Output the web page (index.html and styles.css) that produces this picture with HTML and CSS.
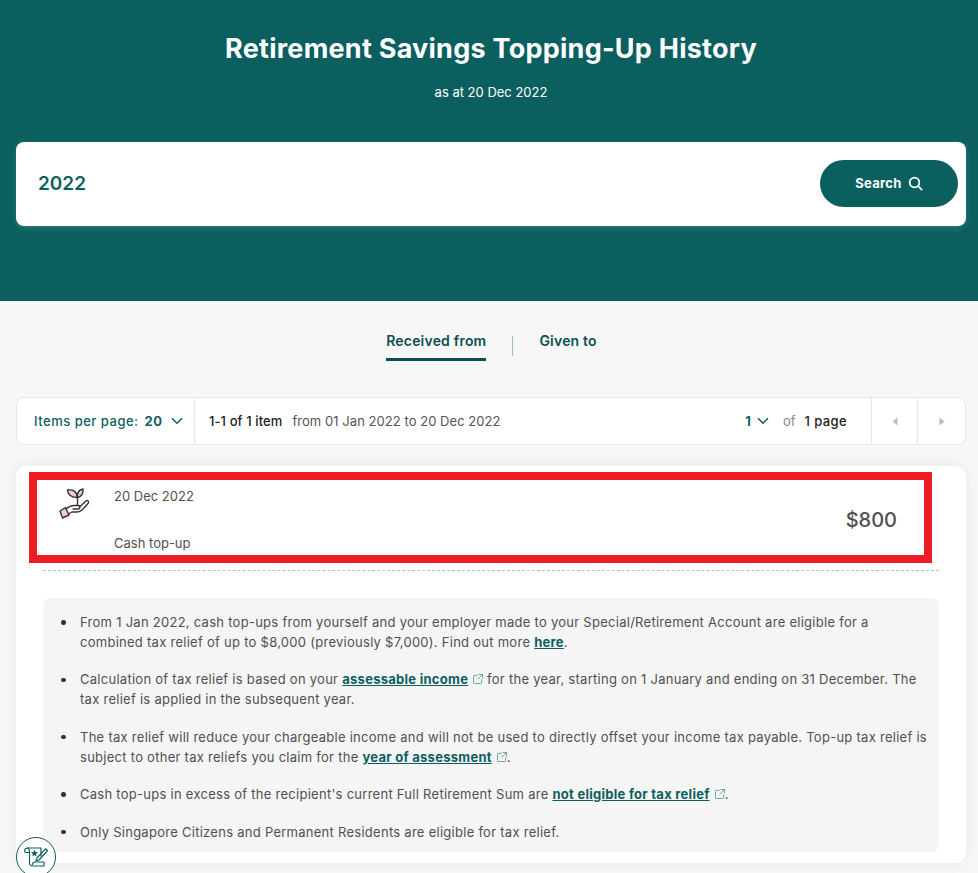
FILE: index.html
```html
<!DOCTYPE html>
<html>
<head>
  <title>Retirement Savings Topping-Up History</title>
  <link rel="stylesheet" href="styles.css">
</head>
<body>
  <div id="hero">
    <h1>Retirement Savings Topping-Up History</h1>
    <p class="as-at">as at 20 Dec 2022</p>
    <form id="searchForm">
      <div class="search-value">2022</div>
      <button type="button" class="search-btn">Search
        <svg width="15" height="15" viewBox="0 0 15 15" fill="none" stroke="#fff" stroke-width="1.8" stroke-linecap="round"><circle cx="6.5" cy="6.5" r="4.8"/><path d="M10.2 10.2 13.6 13.6"/></svg>
      </button>
    </form>
  </div>

  <div id="tabs">
    <div class="tab active">Received from</div>
    <div class="tab-sep"></div>
    <div class="tab">Given to</div>
  </div>

  <div id="toolbar">
    <div class="per-page">
      <span>Items per page:</span>
      <b>20</b>
      <svg class="chev" width="12" height="8" viewBox="0 0 12 8" fill="none" stroke="#0b5f5f" stroke-width="1.5"><path d="M1 1.2 6 6.2 11 1.2"/></svg>
    </div>
    <div class="range">
      <span class="range-count">1-1 of 1 item</span>
      <span class="range-dates">from 01 Jan 2022 to 20 Dec 2022</span>
    </div>
    <div class="pager">
      <b class="page-num">1</b>
      <svg class="chev" width="12" height="8" viewBox="0 0 12 8" fill="none" stroke="#0b5f5f" stroke-width="1.5"><path d="M1 1.2 6 6.2 11 1.2"/></svg>
      <span class="of">of</span>
      <span class="page-total">1 page</span>
    </div>
    <div class="arrow"><svg width="6" height="9" viewBox="0 0 6 9"><path d="M5.5 0.5V8.500L0.500 4.500Z" fill="#bdbdbd"/></svg></div>
    <div class="arrow"><svg width="6" height="9" viewBox="0 0 6 9"><path d="M0.500 0.500V8.500L5.500 4.500Z" fill="#bdbdbd"/></svg></div>
  </div>

  <div id="card">
    <div class="entry">
      <svg class="entry-icon" width="32" height="32" viewBox="0 0 32 32" fill="none" stroke="#3b3136" stroke-width="1.400" stroke-linejoin="round" stroke-linecap="round">
        <path d="M1 23 6.500 19.500 10 27 3.500 30Z" fill="#f3c9e0"/>
        <path d="M7 21C10 18.500 12 17.500 15 17.500H19C21.500 17.500 21.500 21 19 21H14"/>
        <path d="M20.500 19 27 13C28.500 11.500 30.500 13.500 29 15.500L23.500 21.500C22 23 20 24 18 24H13L9.500 26"/>
        <path d="M18.500 9.500V17"/>
        <path d="M18.500 9.500C13 9.500 9 7.500 8.500 2 13.500 1.200 18 3.500 18.500 9.500Z" fill="#f3c9e0"/>
        <path d="M18.500 9.500C18 5 20 1.800 24 1 24.500 5.500 22.500 8.500 18.500 9.500Z" fill="#f3c9e0"/>
      </svg>
      <div class="entry-text">
        <div>20 Dec 2022</div>
        <div>Cash top-up</div>
      </div>
      <div class="entry-amount">$800</div>
    </div>
    <div class="dots"></div>
    <ul class="notes">
      <li>From 1 Jan 2022, cash top-ups from yourself and your employer made to your Special/Retirement Account are eligible for a combined tax relief of up to $8,000 (previously $7,000). Find out more <a href="#">here</a>.</li>
      <li>Calculation of tax relief is based on your <a href="#">assessable income</a><svg class="ext" width="10" height="10" viewBox="0 0 11 11" fill="none" stroke="#5f9c9c" stroke-width="1"><path d="M5 1.500H1.500A1 1 0 0 0 .5 2.500V9.500A1 1 0 0 0 1.500 10.500H8.500A1 1 0 0 0 9.500 9.500V6M6 .5H10.500V5M10.500 .5 5 6"/></svg> for the year, starting on 1 January and ending on 31 December. The tax relief is applied in the subsequent year.</li>
      <li>The tax relief will reduce your chargeable income and will not be used to directly offset your income tax payable. Top-up tax relief is subject to other tax reliefs you claim for the <a href="#">year of assessment</a><svg class="ext" width="10" height="10" viewBox="0 0 11 11" fill="none" stroke="#5f9c9c" stroke-width="1"><path d="M5 1.500H1.500A1 1 0 0 0 .5 2.500V9.500A1 1 0 0 0 1.500 10.500H8.500A1 1 0 0 0 9.500 9.500V6M6 .5H10.500V5M10.500 .5 5 6"/></svg>.</li>
      <li>Cash top-ups in excess of the recipient's current Full Retirement Sum are <a href="#">not eligible for tax relief</a><svg class="ext" width="10" height="10" viewBox="0 0 11 11" fill="none" stroke="#5f9c9c" stroke-width="1"><path d="M5 1.500H1.500A1 1 0 0 0 .5 2.500V9.500A1 1 0 0 0 1.500 10.500H8.500A1 1 0 0 0 9.500 9.500V6M6 .5H10.500V5M10.500 .5 5 6"/></svg>.</li>
      <li>Only Singapore Citizens and Permanent Residents are eligible for tax relief.</li>
    </ul>
  </div>

  <div id="feedback">
    <svg width="24" height="20" viewBox="0 0 24 20" fill="none" stroke="#0b5f5f" stroke-width="1.200" stroke-linejoin="round" stroke-linecap="round">
      <path d="M4 1H17V9"/>
      <path d="M4 1C1.800 1 .6 2.200 .6 3.800 .6 5 1.200 5.500 2 5.500H5.500"/>
      <path d="M4 1C5.200 1.800 5.500 3 5.500 5V15.500C5.500 18 7 19 9 19H20V15H11C9.500 15 8.500 16 8.500 17.500"/>
      <path d="M23.500 3.500 21.500 1.800 13 11 12 14 15 13Z"/>
      <path d="M10.500 2.600 11.500 5 14 5.200 12.100 6.900 12.700 9.400 10.500 8 8.300 9.400 8.900 6.900 7 5.200 9.500 5Z" fill="#0b5f5f" stroke="none"/>
    </svg>
  </div>
</body>
</html>
```

FILE: styles.css
```css
body {
  font-family: "Inter", "Noto Sans", sans-serif;
  background-color: #f7f7f7;
  color: #505050;
  margin: 0;
  padding: 0;
}

#hero {
  background-color: #0b5f5f;
  height: 301px;
  padding: 32px 12px 0 16px;
  box-sizing: border-box;
  text-align: center;
}

h1 {
  color: #fff;
  font-size: 27px;
  line-height: 34px;
  font-weight: 700;
  margin: 0;
  letter-spacing: 0.25px;
}

.as-at {
  color: #fff;
  font-size: 13px;
  line-height: 18px;
  margin: 17px 0 41px;
}

#searchForm {
  background-color: #fff;
  border-radius: 8px;
  height: 84px;
  display: flex;
  align-items: center;
  justify-content: space-between;
  padding: 0 8px 0 22px;
  box-shadow: 0 2px 6px rgba(255, 255, 255, 0.15);
}

.search-value {
  color: #0b5f5f;
  font-size: 19px;
  font-weight: 600;
  margin-top: -2px;
}

.search-btn {
  background-color: #0b5f5f;
  color: #fff;
  border: none;
  border-radius: 24px;
  width: 138px;
  height: 47px;
  margin-top: -2px;
  font-family: inherit;
  font-size: 13px;
  font-weight: 700;
  letter-spacing: 0.3px;
  display: flex;
  align-items: center;
  justify-content: center;
  gap: 6px;
}

#tabs {
  display: flex;
  justify-content: center;
  align-items: flex-start;
  height: 96px;
  padding-top: 30px;
  padding-left: 5px;
  box-sizing: border-box;
}

.tab {
  color: #0b5050;
  font-size: 14px;
  font-weight: 600;
  line-height: 20px;
  height: 30px;
  letter-spacing: 0.2px;
}

.tab.active {
  border-bottom: 3px solid #0b5050;
  height: 27px;
}

.tab-sep {
  width: 1px;
  height: 20px;
  background-color: #9dbcbc;
  margin: 5px 26px 0;
}

#toolbar {
  display: flex;
  align-items: stretch;
  height: 48px;
  margin: 0 12px 0 16px;
  box-sizing: border-box;
  background-color: #fff;
  border: 1px solid #e6e6e6;
  border-radius: 8px;
  font-size: 13px;
}

.per-page {
  display: flex;
  align-items: center;
  width: 178px;
  box-sizing: border-box;
  padding-left: 17px;
  border-right: 1px solid #e6e6e6;
  color: #0b5f5f;
  font-weight: 500;
  letter-spacing: 0.5px;
}

.per-page b {
  margin: 0 8px 0 6px;
  font-weight: 700;
}

.range {
  flex: 1;
  display: flex;
  align-items: center;
  padding-left: 14px;
  gap: 10px;
}

.range-count {
  color: #222;
  font-weight: 500;
  letter-spacing: 0.1px;
}

.range-dates {
  color: #555;
  letter-spacing: 0.05px;
}

.pager {
  display: flex;
  align-items: center;
  padding-right: 24px;
}

.page-num {
  color: #0b5f5f;
  margin-right: 6px;
}

.of {
  color: #888;
  margin: 0 9px 0 14px;
}

.page-total {
  color: #222;
  font-weight: 500;
  letter-spacing: 0.4px;
}

.arrow {
  width: 45px;
  display: flex;
  align-items: center;
  justify-content: center;
  border-left: 1px solid #e6e6e6;
}

.arrow:last-child {
  width: 47px;
}

#card {
  background-color: #fff;
  border-radius: 10px;
  margin: 21px 12px 40px 16px;
  height: 397px;
  padding: 6px 27px 0 13px;
  box-sizing: border-box;
  box-shadow: 0 0 14px rgba(0, 0, 0, 0.07);
}

.entry {
  border: 8px solid #ed1c24;
  height: 91px;
  box-sizing: border-box;
  display: flex;
  align-items: flex-start;
  margin-right: 7px;
  font-size: 13px;
}

.entry-icon {
  margin: 8px 0 0 22px;
}

.entry-text {
  margin-left: 23px;
  height: 75px;
  display: flex;
  flex-direction: column;
  justify-content: space-between;
  padding: 7px 0 3px;
  box-sizing: border-box;
  line-height: 18px;
  flex: 1;
}

.entry-amount {
  font-size: 20px;
  font-weight: 500;
  color: #505050;
  margin: 28px 27px 0 0;
}

.dots {
  border-top: 1px dashed #a9c6c0;
  margin: 7px 0 0 14px;
}

.notes {
  background-color: #f5f5f5;
  border-radius: 8px;
  margin: 27px 0 0 14px;
  height: 254px;
  box-sizing: border-box;
  padding: 14px 10px 0 17px;
  font-size: 13px;
  line-height: 20px;
  color: #505050;
  list-style: none;
  letter-spacing: 0.27px;
}

.notes li {
  margin-bottom: 17.4px;
  padding-left: 20px;
  text-indent: -20px;
}

.notes li::before {
  content: "";
  display: inline-block;
  width: 4.5px;
  height: 4.5px;
  border-radius: 50%;
  background-color: #333;
  margin: 0 14.5px 2px 1px;
  vertical-align: middle;
}

.notes a {
  color: #0b5f5f;
  font-weight: 700;
  text-decoration: underline;
}

.ext {
  margin: 0 0 0 5px;
}

#feedback {
  position: fixed;
  left: 16px;
  top: 837px;
  width: 40px;
  height: 40px;
  box-sizing: border-box;
  border: 1.5px solid #0b5f5f;
  border-radius: 50%;
  background-color: #fff;
  display: flex;
  align-items: center;
  justify-content: center;
}
```
